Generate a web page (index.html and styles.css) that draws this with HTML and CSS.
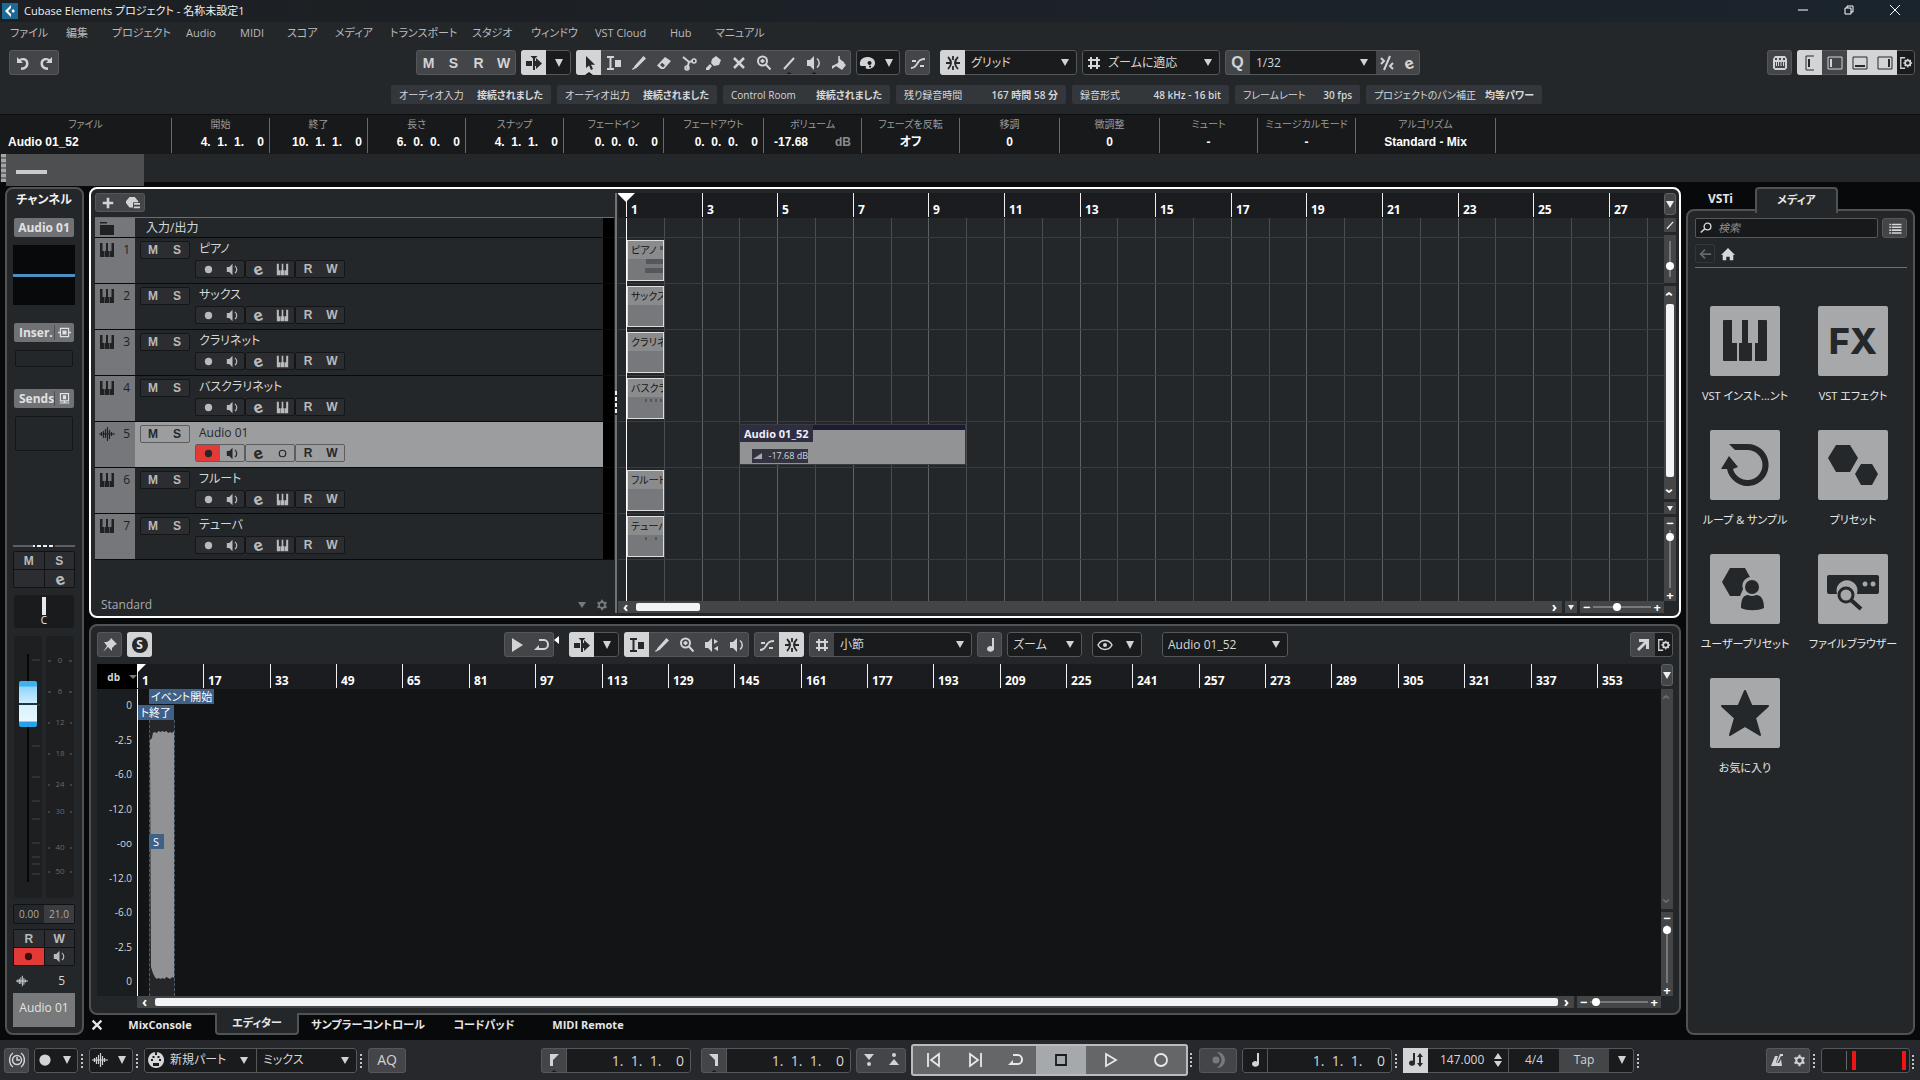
FILE: index.html
```html
<!DOCTYPE html>
<html lang="ja">
<head>
    <meta charset="UTF-8">
    <meta name="viewport" content="width=device-width, initial-scale=1.0">
    <title>Cubase Elements プロジェクト - 名称未設定1</title>
    <link rel="stylesheet" href="styles.css">
</head>
<body>

    <svg class="sprite" aria-hidden="true">
        <symbol id="undo" viewBox="0 0 16 16"><path d="M3 2v6h6L6.800 5.800C10 4.500 12 6 12 8.500S10 12.500 7 12.500V15c5 0 7.500-3 7.500-6.500C14.500 4 10 1.500 5.200 4.200z"/></symbol>
        <symbol id="redo" viewBox="0 0 16 16"><path d="M13 2v6H7l2.200-2.200C6 4.500 4 6 4 8.500S6 12.500 9 12.500V15c-5 0-7.500-3-7.500-6.500C1.500 4 6 1.500 10.800 4.200z"/></symbol>
        <symbol id="autoscroll" viewBox="0 0 16 16"><path d="M0 6h6v5H0zM10 3l6 5.500-6 5.500v-3H9V6h1zM7 3h2v12H7zM4.500 1h7L8 4.500z"/></symbol>
        <symbol id="arrow" viewBox="0 0 16 16"><path d="M5 1v12l3-2.500 2 4.500 2-1-2-4.300h4z"/></symbol>
        <symbol id="range" viewBox="0 0 16 16"><path d="M1 1h7v2H5.500v10H8v2H1v-2h2.500V3H1zM9 5h6v7H9z"/></symbol>
        <symbol id="pencil" viewBox="0 0 16 16"><path d="M12.500 1 15 3.500 5.500 13 2 14.500 3.500 11zM1 15l1-2.500L3.500 14z"/></symbol>
        <symbol id="eraser" viewBox="0 0 16 16"><path d="M9 2l6 4-7 8H5L1 10.500zM4 10l3 2.500 2-2.300L6 7.800z" fill-rule="evenodd"/></symbol>
        <symbol id="cut" viewBox="0 0 16 16"><path d="M2 2l6 5 4-1M6 14l2-7" fill="none" stroke="currentColor" stroke-width="2"/><circle cx="13" cy="6" r="2" fill="none" stroke="currentColor" stroke-width="1.500"/><circle cx="6" cy="13" r="2" fill="none" stroke="currentColor" stroke-width="1.500"/></symbol>
        <symbol id="glue" viewBox="0 0 16 16"><path d="M10 1l5 4-2 5-5 1-3-3 1-4zM4 9l2 2-3 4H0v-2z"/></symbol>
        <symbol id="cross" viewBox="0 0 16 16"><path d="M3 3l10 10M13 3L3 13" stroke="currentColor" stroke-width="2.500"/></symbol>
        <symbol id="zoom" viewBox="0 0 16 16"><circle cx="6.500" cy="6" r="4.500" fill="none" stroke="currentColor" stroke-width="2"/><path d="M9.500 9l5 5.500M4.500 6h4M6.500 4v4" stroke="currentColor" stroke-width="2"/></symbol>
        <symbol id="line" viewBox="0 0 16 16"><path d="M3 14L13 3" stroke="currentColor" stroke-width="2"/></symbol>
        <symbol id="speaker" viewBox="0 0 16 16"><path d="M1 5h3l4-4v14l-4-4H1z"/><path d="M11 3.500c3 2.500 3 6.500 0 9" fill="none" stroke="currentColor" stroke-width="1.500"/></symbol>
        <symbol id="scrub" viewBox="0 0 16 16"><path d="M1 5h3l4-4v14l-4-4H1zM10 7V2l4 2.500zM14 9v5l-4-2.500z"/></symbol>
        <symbol id="bucket" viewBox="0 0 16 16"><path d="M8 3l7 7-4 5-6-4-4 3v-3l6-3z"/><path d="M8 1v4l5 3" fill="none" stroke="currentColor" stroke-width="1.500"/></symbol>
        <symbol id="palette" viewBox="0 0 16 16"><path d="M8 2c5 0 8 2.500 8 6s-3 6-7 6c-2 0-3-1-2-3H2C0 11 0 2 8 2zm2.500 4a2 2 0 1 0 .1 0zM11 10.500a1 1 0 1 0 .1 0z" fill-rule="evenodd"/></symbol>
        <symbol id="fade" viewBox="0 0 16 16"><path d="M1 13c8 0 4-9 14-9M2 6h4M10 11h4" fill="none" stroke="currentColor" stroke-width="2"/></symbol>
        <symbol id="snap" viewBox="0 0 16 16"><path d="M3 2c4 4 4 8 0 12M13 2c-4 4-4 8 0 12M8 1v4M8 11v4M1 8h4M11 8h4" fill="none" stroke="currentColor" stroke-width="1.800"/></symbol>
        <symbol id="hash" viewBox="0 0 16 16"><path d="M5 2v12M11 2v12M2 5h12M2 11h12" stroke="currentColor" stroke-width="2"/></symbol>
        <symbol id="iq" viewBox="0 0 16 16"><path d="M11 1L5 15M2 3l3 3-3 3M14 8l-3 3 3 3" fill="none" stroke="currentColor" stroke-width="2"/></symbol>
        <symbol id="kbd" viewBox="0 0 16 16"><path d="M3 1h10l2 3v9l-2 2H3l-2-2V4zM3 3v2h2V3zM7 3v2h2V3zM11 3v2h2V3zM3 7v6h10V7h-1v4h-1V7H9.500v4h-1V7H7v4H6V7H5v4H4V7z" fill-rule="evenodd"/></symbol>
        <symbol id="zl" viewBox="0 0 16 16"><path d="M12 1H4v14h8" fill="none" stroke="currentColor"/><path d="M6 4h2v8H6z"/></symbol>
        <symbol id="zi" viewBox="0 0 16 16"><path d="M1 2h14v12H1z" fill="none" stroke="currentColor"/><path d="M3 4h2v8H3z"/></symbol>
        <symbol id="zb" viewBox="0 0 16 16"><path d="M1 2h14v12H1z" fill="none" stroke="currentColor"/><path d="M3 10h10v2H3z"/></symbol>
        <symbol id="zr" viewBox="0 0 16 16"><path d="M1 2h14v12H1z" fill="none" stroke="currentColor"/><path d="M11 4h2v8h-2z"/></symbol>
        <symbol id="setup" viewBox="0 0 16 16"><path d="M7 2H2v12h5" fill="none" stroke="currentColor" stroke-width="1.500"/><circle cx="10" cy="8" r="3" fill="none" stroke="currentColor" stroke-width="2"/><path d="M10 3v2M10 11v2M5 8h2M13 8h2M6.500 4.500L8 6M12 10l1.500 1.500M13.500 4.500L12 6M8 10l-1.500 1.500" stroke="currentColor" stroke-width="1.500"/></symbol>
        <symbol id="gear" viewBox="0 0 16 16"><circle cx="8" cy="8" r="4" fill="none" stroke="currentColor" stroke-width="2.500"/><path d="M8 1v3M8 12v3M1.900 4.500l2.600 1.500M11.500 10l2.600 1.500M1.900 11.500L4.500 10M11.500 6l2.600-1.500" stroke="currentColor" stroke-width="2.500"/></symbol>
        <symbol id="down" viewBox="0 0 16 16"><path d="M4 4h8l-4 8z"/></symbol>
        <symbol id="plus" viewBox="0 0 16 16"><path d="M8 2v12M2 8h12" stroke="currentColor" stroke-width="3"/></symbol>
        <symbol id="preset" viewBox="0 0 16 16"><path d="M4 1h6l4 5v1H8v6H4L0 8V6zM9 8h7v2H9zM9 12h7v2H9z"/></symbol>
        <symbol id="folder" viewBox="0 0 16 16"><path d="M1 2h7v1.500H1zM1 5h14v10H1z"/></symbol>
        <symbol id="keys" viewBox="0 0 16 16"><path d="M1 1h2.500v8H5v6H1zM7 1h2v8h1.500v6h-5V9H7zM12.500 1H15v14h-4V9h1.500z"/></symbol>
        <symbol id="wave" viewBox="0 0 16 16"><path d="M0 8h16M2.500 6v4M4.500 5v7M6.500 3v9M8.500 1v14M10.500 4v9M12.500 6v4" stroke="currentColor" stroke-width="1.200"/></symbol>
        <symbol id="dot" viewBox="0 0 16 16"><circle cx="8" cy="8" r="4.500"/></symbol>
        <symbol id="ring" viewBox="0 0 16 16"><circle cx="8" cy="8" r="4" fill="none" stroke="currentColor" stroke-width="1.500"/></symbol>
        <symbol id="plug" viewBox="0 0 16 16"><path d="M3 3h10v10H3z" fill="none" stroke="currentColor" stroke-width="1.500"/><path d="M5.500 5.500h5v5h-5zM0 7h3v2H0zM13 7h3v2h-3z"/></symbol>
        <symbol id="send" viewBox="0 0 16 16"><path d="M3 2h10v9H3z" fill="none" stroke="currentColor" stroke-width="1.500"/><path d="M6 4h4v5H6zM7 11h2v3H7zM2 13h12v1H2z"/></symbol>
        <symbol id="search" viewBox="0 0 16 16"><circle cx="10" cy="6" r="4.500" fill="none" stroke="currentColor" stroke-width="1.800"/><path d="M6.500 9L1 14" stroke="currentColor" stroke-width="2"/></symbol>
        <symbol id="list" viewBox="0 0 16 16"><path d="M1 2h2v2H1zM4 2h12v2H4zM1 5.500h2v2H1zM4 5.500h12v2H4zM1 9h2v2H1zM4 9h12v2H4zM1 12.500h2v2H1zM4 12.500h12v2H4z"/></symbol>
        <symbol id="back" viewBox="0 0 16 16"><path d="M15 8H3M8 3L3 8l5 5" fill="none" stroke="currentColor" stroke-width="2"/></symbol>
        <symbol id="home" viewBox="0 0 16 16"><path d="M8 1l8 8h-2v6h-4v-4H6v4H2V9H0z"/></symbol>
        <symbol id="pin" viewBox="0 0 16 16"><path d="M9 1l6 6-2 1-3 3v3L6 10l-5 5 4-6-3-4h3l3-2z"/></symbol>
        <symbol id="play" viewBox="0 0 16 16"><path d="M3 1l11 7-11 7z"/></symbol>
        <symbol id="playo" viewBox="0 0 16 16"><path d="M3 2l10 6-10 6z" fill="none" stroke="currentColor" stroke-width="1.800"/></symbol>
        <symbol id="loop" viewBox="0 0 16 16"><path d="M5 3h5a4 4.500 0 0 1 0 9H3" fill="none" stroke="currentColor" stroke-width="2"/><path d="M0 13l5-5v5z"/></symbol>
        <symbol id="note" viewBox="0 0 16 16"><path d="M10 1h2v11a3.500 2.800 0 1 1-2-2.600z"/></symbol>
        <symbol id="eye" viewBox="0 0 16 16"><path d="M1 8c3-6 11-6 14 0-3 6-11 6-14 0z" fill="none" stroke="currentColor" stroke-width="1.500"/><circle cx="8" cy="8" r="2"/></symbol>
        <symbol id="open" viewBox="0 0 16 16"><path d="M4 2h10v10h-3V7l-7 7-2-2 7-7H4z"/></symbol>
        <symbol id="clock" viewBox="0 0 16 16"><circle cx="8" cy="8" r="4.500" fill="none" stroke="currentColor" stroke-width="1.500"/><path d="M8 5v3h3M4 1C-.5 4-.5 12 4 15M12 1c4.500 3 4.500 11 0 14" fill="none" stroke="currentColor" stroke-width="1.500"/></symbol>
        <symbol id="midi" viewBox="0 0 16 16"><path d="M8 0a8 8 0 1 0 .1 0zM7 0h2v3H7zM3 7h2v2H3zM11 7h2v2h-2zM4.500 4h2v2h-2zM9.500 4h2v2h-2zM5 11h6v3H5z" fill-rule="evenodd"/></symbol>
        <symbol id="locl" viewBox="0 0 16 16"><path d="M4 2h9L7 8v6H4z"/></symbol>
        <symbol id="locr" viewBox="0 0 16 16"><path d="M3 2h9v12H9V8z"/></symbol>
        <symbol id="punchi" viewBox="0 0 16 16"><path d="M3 2h10L8 8z"/><circle cx="8" cy="12" r="2"/></symbol>
        <symbol id="puncho" viewBox="0 0 16 16"><path d="M3 13h10L8 7z"/><circle cx="8" cy="3" r="2"/></symbol>
        <symbol id="prev" viewBox="0 0 16 16"><path d="M2 1v14M13 2L5 8l8 6z" fill="none" stroke="currentColor" stroke-width="1.800"/></symbol>
        <symbol id="next" viewBox="0 0 16 16"><path d="M14 1v14M3 2l8 6-8 6z" fill="none" stroke="currentColor" stroke-width="1.800"/></symbol>
        <symbol id="stop" viewBox="0 0 16 16"><path d="M3 3h10v10H3z" fill="none" stroke="currentColor" stroke-width="1.800"/></symbol>
        <symbol id="rec" viewBox="0 0 16 16"><circle cx="8" cy="8" r="6" fill="none" stroke="currentColor" stroke-width="1.800"/></symbol>
        <symbol id="jog" viewBox="0 0 16 16"><path d="M7 0a8 8 0 0 1 0 16c6-5 6-11 0-16z"/><circle cx="6" cy="8" r="3.500"/></symbol>
        <symbol id="tempo" viewBox="0 0 16 16"><path d="M5 1h2v10a3 2.600 0 1 1-2-2.300zM12 1l3 4h-2v6h2l-3 4-3-4h2V5H9z"/></symbol>
        <symbol id="metro" viewBox="0 0 16 16"><path d="M6 4h3l-1 3-1 4h3l2-4 1 7H2zM11 2h3v2h-2L8 12H7z"/></symbol>
    </svg>

    <header class="header">
        <div class="titlebar">
            <svg class="logo" viewBox="0 0 16 16"><rect width="16" height="16" fill="#1c6a96"/><path d="M9 2L3 8l6 6V11L6 8l3-3zM11 6l2 2-2 2-1.500-2z" fill="#fff"/></svg>
            <h1>Cubase Elements プロジェクト - 名称未設定1</h1>
            <div class="window-buttons">
                <button aria-label="最小化"><svg viewBox="0 0 10 10"><path d="M0 5h10"/></svg></button>
                <button aria-label="元に戻す"><svg viewBox="0 0 10 10"><path d="M1 3h6v6H1zM3 3V1h6v6H7"/></svg></button>
                <button aria-label="閉じる"><svg viewBox="0 0 10 10"><path d="M0 0l10 10M10 0L0 10"/></svg></button>
            </div>
        </div>

        <nav class="menu">
            <button>ファイル</button>
            <button>編集</button>
            <button>プロジェクト</button>
            <button>Audio</button>
            <button>MIDI</button>
            <button>スコア</button>
            <button>メディア</button>
            <button>トランスポート</button>
            <button>スタジオ</button>
            <button>ウィンドウ</button>
            <button>VST Cloud</button>
            <button>Hub</button>
            <button>マニュアル</button>
        </nav>

        <div class="toolbar">
            <div class="side">
                <div class="group">
                    <button class="tool" aria-label="元に戻す"><svg class="icon"><use href="#undo"/></svg></button>
                    <button class="tool" aria-label="やり直し"><svg class="icon"><use href="#redo"/></svg></button>
                </div>
            </div>
            <div class="tools">
                <div class="group letters">
                    <button class="tool">M</button>
                    <button class="tool">S</button>
                    <button class="tool">R</button>
                    <button class="tool">W</button>
                </div>
                <div class="group">
                    <button class="tool on" aria-label="オートスクロール"><svg class="icon"><use href="#autoscroll"/></svg></button>
                    <button class="tool dark" aria-label="設定"><svg class="icon"><use href="#down"/></svg></button>
                </div>
                <div class="group">
                    <button class="tool on notch" aria-label="選択"><svg class="icon"><use href="#arrow"/></svg></button>
                    <button class="tool" aria-label="範囲選択"><svg class="icon"><use href="#range"/></svg></button>
                    <button class="tool" aria-label="鉛筆"><svg class="icon"><use href="#pencil"/></svg></button>
                    <button class="tool" aria-label="消しゴム"><svg class="icon"><use href="#eraser"/></svg></button>
                    <button class="tool" aria-label="はさみ"><svg class="icon"><use href="#cut"/></svg></button>
                    <button class="tool" aria-label="のり"><svg class="icon"><use href="#glue"/></svg></button>
                    <button class="tool" aria-label="ミュート"><svg class="icon"><use href="#cross"/></svg></button>
                    <button class="tool" aria-label="ズーム"><svg class="icon"><use href="#zoom"/></svg></button>
                    <button class="tool notch" aria-label="ライン"><svg class="icon"><use href="#line"/></svg></button>
                    <button class="tool notch" aria-label="再生"><svg class="icon"><use href="#speaker"/></svg></button>
                    <button class="tool" aria-label="カラー"><svg class="icon"><use href="#bucket"/></svg></button>
                </div>
                <div class="group">
                    <button class="tool dark narrow" aria-label="カラーメニュー"><svg class="icon"><use href="#palette"/></svg></button>
                    <button class="tool dark narrow" aria-label="カラー設定"><svg class="icon"><use href="#down"/></svg></button>
                </div>
                <div class="group">
                    <button class="tool" aria-label="ゼロクロスポイント"><svg class="icon"><use href="#fade"/></svg></button>
                </div>
                <div class="group gap-left">
                    <button class="tool on" aria-label="スナップ"><svg class="icon"><use href="#snap"/></svg></button>
                    <label class="dd w112"><select aria-label="スナップタイプ"><option>グリッド</option></select></label>
                </div>
                <div class="group">
                    <label class="dd w138 icon-left"><svg class="icon"><use href="#hash"/></svg><select aria-label="グリッドタイプ"><option>ズームに適応</option></select></label>
                </div>
                <div class="group">
                    <button class="tool big">Q</button>
                    <label class="dd w126"><select aria-label="クオンタイズ"><option>1/32</option></select></label>
                    <button class="tool narrow" aria-label="iQ"><svg class="icon"><use href="#iq"/></svg></button>
                    <button class="tool narrow e"><span>e</span></button>
                </div>
            </div>
            <div class="tools">
                <div class="group">
                    <button class="tool" aria-label="キーボード"><svg class="icon"><use href="#kbd"/></svg></button>
                </div>
                <div class="group">
                    <button class="tool on" aria-label="左ゾーン"><svg class="icon"><use href="#zl"/></svg></button>
                    <button class="tool" aria-label="インスペクター"><svg class="icon"><use href="#zi"/></svg></button>
                    <button class="tool on" aria-label="下ゾーン"><svg class="icon"><use href="#zb"/></svg></button>
                    <button class="tool on" aria-label="右ゾーン"><svg class="icon"><use href="#zr"/></svg></button>
                    <button class="tool dark slim" aria-label="設定"><svg class="icon"><use href="#setup"/></svg></button>
                </div>
            </div>
        </div>

        <dl class="status">
            <div><dt>オーディオ入力</dt><dd>接続されました</dd></div>
            <div><dt>オーディオ出力</dt><dd>接続されました</dd></div>
            <div><dt>Control Room</dt><dd>接続されました</dd></div>
            <div><dt>残り録音時間</dt><dd>167 時間 58 分</dd></div>
            <div><dt>録音形式</dt><dd>48 kHz - 16 bit</dd></div>
            <div><dt>フレームレート</dt><dd>30 fps</dd></div>
            <div><dt>プロジェクトのパン補正</dt><dd>均等パワー</dd></div>
        </dl>
    </header>

    <dl class="infoline">
        <div class="file"><dt>ファイル</dt><dd>Audio 01_52</dd></div>
        <div class="pos"><dt>開始</dt><dd>4.  1.  1.    0</dd></div>
        <div class="pos"><dt>終了</dt><dd>10.  1.  1.    0</dd></div>
        <div class="pos"><dt>長さ</dt><dd>6.  0.  0.    0</dd></div>
        <div class="pos"><dt>スナップ</dt><dd>4.  1.  1.    0</dd></div>
        <div class="pos"><dt>フェードイン</dt><dd>0.  0.  0.    0</dd></div>
        <div class="pos"><dt>フェードアウト</dt><dd>0.  0.  0.    0</dd></div>
        <div class="vol"><dt>ボリューム</dt><dd>-17.68 <span>dB</span></dd></div>
        <div><dt>フェーズを反転</dt><dd>オフ</dd></div>
        <div><dt>移調</dt><dd>0</dd></div>
        <div><dt>微調整</dt><dd>0</dd></div>
        <div><dt>ミュート</dt><dd>-</dd></div>
        <div><dt>ミュージカルモード</dt><dd>-</dd></div>
        <div><dt>アルゴリズム</dt><dd>Standard - Mix</dd></div>
    </dl>

    <div class="overview"><div class="overview-view"><span class="overview-event"></span></div></div>

    <main class="main">
        <aside class="channel">
            <h2>チャンネル</h2>
            <button class="chip">Audio 01</button>
            <div class="eq"></div>
            <div class="chip split"><span>Inser.</span><svg class="icon"><use href="#plug"/></svg></div>
            <div class="slot"></div>
            <div class="chip split"><span>Sends</span><svg class="icon"><use href="#send"/></svg></div>
            <div class="slot tall"></div>
            <div class="channel-bottom">
                <div class="handle"></div>
                <div class="pad">
                    <button>M</button><button>S</button>
                    <button aria-label="バイパス"></button><button class="e"><span>e</span></button>
                </div>
                <div class="pan"><i></i>C</div>
                <div class="faders">
                    <div class="well">
                        <svg class="ticks" viewBox="0 0 8 262"><path d="M0 24h8M0 69h8M0 110h8M0 141h8M0 165h8M0 183h8M0 207h8M0 221h8M0 228h8M0 238h8"/></svg>
                        <input type="range" class="fader" aria-label="ボリューム" min="0" max="100" value="15">
                    </div>
                    <div class="well">
                        <svg class="meter" viewBox="0 0 28 262">
                            <text x="14" y="27">0</text><text x="14" y="58">6</text><text x="14" y="89">12</text><text x="14" y="120">18</text><text x="14" y="151">24</text><text x="14" y="178">30</text><text x="14" y="214">40</text><text x="14" y="238">50</text>
                            <path d="M2 25h3M23 25h3M2 56h3M23 56h3M2 87h2M24 87h2M2 118h2M24 118h2M2 149h2M24 149h2M2 176h2M24 176h2M2 212h2M24 212h2M2 236h2M24 236h2"/>
                        </svg>
                    </div>
                </div>
                <div class="values"><span>0.00</span><span>21.0</span></div>
                <div class="pad">
                    <button>R</button><button>W</button>
                    <button class="armed" aria-label="録音可能"><svg class="icon"><use href="#dot"/></svg></button><button aria-label="モニタリング"><svg class="icon"><use href="#speaker"/></svg></button>
                </div>
                <div class="channel-id"><svg class="icon"><use href="#wave"/></svg><span>5</span></div>
                <div class="channel-name">Audio 01</div>
            </div>
        </aside>

        <section class="center">
            <div class="project">
                <div class="tracklist">
                    <div class="tracklist-head">
                        <div class="group short">
                            <button class="tool" aria-label="トラックを追加"><svg class="icon"><use href="#plus"/></svg></button>
                            <button class="tool" aria-label="プリセット"><svg class="icon"><use href="#preset"/></svg></button>
                        </div>
                    </div>
                    <div id="tracks"></div>
                    <div class="tracklist-foot">Standard<span class="tri"></span><svg class="icon"><use href="#gear"/></svg></div>
                </div>
                <div class="divider"></div>
                <div class="timeline">
                    <div class="ruler" id="ruler"></div>
                    <div class="lanes" id="lanes"></div>
                    <div class="hbar">
                        <div class="hscroll"><button aria-label="左へ">‹</button><span class="thumb t-project"></span><button class="end" aria-label="右へ">›</button></div>
                        <button class="mini" aria-label="メニュー"><span class="tri"></span></button>
                        <div class="hzoom"><b>−</b><input type="range" aria-label="横ズーム" value="40"><b>+</b></div>
                    </div>
                </div>
                <div class="vbar">
                    <button class="mini head" aria-label="メニュー"><span class="tri"></span></button>
                    <button class="mini edit" aria-label="編集"><svg class="icon"><use href="#line"/></svg></button>
                    <div class="vzoom wave-zoom"><input type="range" aria-label="波形ズーム" value="75"></div>
                    <div class="vscroll"><button aria-label="上へ">‹</button><span class="thumb"></span><button aria-label="下へ">›</button></div>
                    <button class="mini" aria-label="メニュー"><span class="tri"></span></button>
                    <div class="vzoom"><b>−</b><input type="range" aria-label="縦ズーム" value="5"><b>+</b></div>
                </div>
            </div>

            <div class="lower">
                <div class="lower-bar">
                    <div class="group"><button class="tool" aria-label="固定"><svg class="icon"><use href="#pin"/></svg></button></div>
                    <div class="group"><button class="tool on solo"><span>S</span></button></div>
                    <div class="lower-tools">
                        <div class="group">
                            <button class="tool" aria-label="試聴"><svg class="icon"><use href="#play"/></svg></button>
                            <button class="tool" aria-label="ループ"><svg class="icon"><use href="#loop"/></svg></button>
                        </div>
                        <span class="tri-left"></span>
                        <div class="group">
                            <button class="tool on" aria-label="オートスクロール"><svg class="icon"><use href="#autoscroll"/></svg></button>
                            <button class="tool dark" aria-label="設定"><svg class="icon"><use href="#down"/></svg></button>
                        </div>
                        <div class="group">
                            <button class="tool on" aria-label="範囲選択"><svg class="icon"><use href="#range"/></svg></button>
                            <button class="tool" aria-label="鉛筆"><svg class="icon"><use href="#pencil"/></svg></button>
                            <button class="tool" aria-label="ズーム"><svg class="icon"><use href="#zoom"/></svg></button>
                            <button class="tool" aria-label="スクラブ"><svg class="icon"><use href="#scrub"/></svg></button>
                            <button class="tool" aria-label="再生"><svg class="icon"><use href="#speaker"/></svg></button>
                        </div>
                        <div class="group">
                            <button class="tool" aria-label="ゼロクロスポイント"><svg class="icon"><use href="#fade"/></svg></button>
                            <button class="tool on" aria-label="スナップ"><svg class="icon"><use href="#snap"/></svg></button>
                        </div>
                        <div class="group">
                            <button class="tool" aria-label="グリッド"><svg class="icon"><use href="#hash"/></svg></button>
                            <label class="dd w138"><select aria-label="小節"><option>小節</option></select></label>
                        </div>
                        <div class="group"><button class="tool" aria-label="音符"><svg class="icon"><use href="#note"/></svg></button></div>
                        <div class="group"><label class="dd w75"><select aria-label="ズームプリセット"><option>ズーム</option></select></label></div>
                        <div class="group gap-left">
                            <button class="tool dark" aria-label="表示"><svg class="icon"><use href="#eye"/></svg></button>
                            <button class="tool dark" aria-label="表示設定"><svg class="icon"><use href="#down"/></svg></button>
                        </div>
                        <div class="group gap-wide"><label class="dd w126"><select aria-label="イベント"><option>Audio 01_52</option></select></label></div>
                    </div>
                    <div class="group right">
                        <button class="tool" aria-label="独立ウィンドウ"><svg class="icon"><use href="#open"/></svg></button>
                        <button class="tool dark slim" aria-label="設定"><svg class="icon"><use href="#setup"/></svg></button>
                    </div>
                </div>
                <div class="sample">
                    <div class="scale">
                        <div class="scale-head">db<span class="tri"></span></div>
                        <ol><li>0</li><li>-2.5</li><li>-6.0</li><li>-12.0</li><li>-oo</li><li>-12.0</li><li>-6.0</li><li>-2.5</li><li>0</li></ol>
                    </div>
                    <div class="timeline">
                        <div class="ruler" id="sampleRuler"></div>
                        <div class="wave-area">
                            <div class="event">
                                <svg viewBox="0 0 25 250" preserveAspectRatio="none"><path d="M0 10l2-2 1-5 2-1 2 1 2-2 2 1 2-1 2 1 2-1 2 2 2-1 2 1 2-2v247l-2-1-2 2-2-1-2-1-2 2-2-1-2 1-2-1-2 1-2-2-2-4-2-6z"/></svg>
                            </div>
                            <span class="flag start">イベント開始</span>
                            <span class="flag stop">ト終了</span>
                            <span class="flag sync">S</span>
                            <span class="playline"></span>
                        </div>
                        <div class="hbar">
                            <div class="hscroll"><button aria-label="左へ">‹</button><span class="thumb"></span><button class="end" aria-label="右へ">›</button></div>
                            <div class="hzoom"><b>−</b><input type="range" aria-label="横ズーム" value="3"><b>+</b></div>
                        </div>
                    </div>
                    <div class="vbar">
                        <button class="mini head" aria-label="メニュー"><span class="tri"></span></button>
                        <div class="vscroll off"><button aria-label="上へ">‹</button><button aria-label="下へ">›</button></div>
                        <div class="vzoom"><b>−</b><input type="range" aria-label="縦ズーム" value="2"><b>+</b></div>
                    </div>
                </div>
            </div>

            <nav class="lower-tabs">
                <button class="close" aria-label="閉じる"><svg class="icon"><use href="#cross"/></svg></button>
                <button>MixConsole</button>
                <button class="active">エディター</button>
                <button>サンプラーコントロール</button>
                <button>コードパッド</button>
                <button>MIDI Remote</button>
            </nav>
        </section>

        <aside class="rack">
            <nav class="rack-tabs"><button>VSTi</button><button class="active">メディア</button></nav>
            <div class="rack-body">
                <div class="search">
                    <label><svg class="icon"><use href="#search"/></svg><input type="text" placeholder="検索" aria-label="検索"></label>
                    <button aria-label="一覧"><svg class="icon"><use href="#list"/></svg></button>
                </div>
                <div class="crumbs">
                    <button class="back" aria-label="戻る"><svg class="icon"><use href="#back"/></svg></button>
                    <button aria-label="ホーム"><svg class="icon"><use href="#home"/></svg></button>
                </div>
                <div class="tiles">
                    <button><span class="tile"><svg viewBox="0 0 70 70"><path d="M14 14h8v23h5v18H14q-1 0-1-1V15q0-1 1-1zM32 14h6v23h4v17q0 1-1 1H30q-1 0-1-1V37h3zM48 14h8q1 0 1 1v39q0 1-1 1H45V37h3z"/></svg></span>VST インスト...ント</button>
                    <button><span class="tile fx">FX</span>VST エフェクト</button>
                    <button><span class="tile"><svg viewBox="0 0 70 70"><path d="M19 14h18a21 21 0 1 1-20 25h-6l8-13 9 11-5 2a15 15 0 1 0 14-19H25z"/></svg></span>ループ &amp; サンプル</button>
                    <button><span class="tile"><svg viewBox="0 0 70 70"><path d="M18 15h14l8 13-8 14H18l-8-14zM43 34h11l6 10-6 11H43l-6-11z"/></svg></span>プリセット</button>
                    <button><span class="tile"><svg viewBox="0 0 70 70"><path d="M20 14h15l5 9a9 9 0 0 0-7 12l-3 7H20l-8-14z"/><circle cx="42" cy="33" r="7"/><path d="M31 54c0-10 3-13 7-13q4 2 8 0c5 0 8 4 8 13-6 3-17 3-23 0z"/></svg></span>ユーザープリセット</button>
                    <button><span class="tile"><svg viewBox="0 0 70 70"><path d="M11 21h48q2 0 2 2v15q0 2-2 2H39a10.500 10.500 0 1 0-20 0h-8q-2 0-2-2V23q0-2 2-2zM47 27.500a2.500 2.500 0 1 0 .1 0zM55 27.500a2.500 2.500 0 1 0 .1 0z" fill-rule="evenodd"/><circle cx="28" cy="41" r="7" fill="none" stroke="currentColor" stroke-width="3"/><path d="M33 46l10 9" stroke="currentColor" stroke-width="4"/></svg></span>ファイルブラウザー</button>
                    <button><span class="tile"><svg viewBox="0 0 70 70"><path d="M35 13l6.500 15H58l-13 12 5 17-15-9-15 9 5-17-13-12h16.500z" stroke="currentColor" stroke-width="2" stroke-linejoin="round"/></svg></span>お気に入り</button>
                </div>
            </div>
        </aside>
    </main>

    <footer class="transport">
        <div class="group"><button class="tool" aria-label="待機"><svg class="icon"><use href="#clock"/></svg></button></div>
        <div class="group dots">
            <button class="tool dark narrow" aria-label="録音モード"><svg class="icon wide"><use href="#dot"/></svg></button>
            <button class="tool dark narrow" aria-label="録音モード設定"><svg class="icon"><use href="#down"/></svg></button>
        </div>
        <div class="group dots">
            <button class="tool dark narrow" aria-label="オーディオ録音"><svg class="icon"><use href="#wave"/></svg></button>
            <button class="tool dark narrow" aria-label="オーディオ録音設定"><svg class="icon"><use href="#down"/></svg></button>
        </div>
        <div class="group dots">
            <label class="dd w112 icon-left"><svg class="icon"><use href="#midi"/></svg><select aria-label="MIDI録音"><option>新規パート</option></select></label>
            <label class="dd w100"><select aria-label="サイクル録音"><option>ミックス</option></select></label>
        </div>
        <div class="group"><button class="tool aq">AQ</button></div>
        <div class="group locator first"><button class="tool notch" aria-label="左ロケーター"><svg class="icon"><use href="#locl"/></svg></button><output>1.  1.  1.    0</output></div>
        <div class="group locator"><button class="tool notch" aria-label="右ロケーター"><svg class="icon"><use href="#locr"/></svg></button><output>1.  1.  1.    0</output></div>
        <div class="group">
            <button class="tool" aria-label="パンチイン"><svg class="icon"><use href="#punchi"/></svg></button>
            <button class="tool" aria-label="パンチアウト"><svg class="icon"><use href="#puncho"/></svg></button>
        </div>
        <div class="play dots">
            <button class="p3" aria-label="先頭へ"><svg class="icon"><use href="#prev"/></svg></button>
            <button class="p3" aria-label="次へ"><svg class="icon"><use href="#next"/></svg></button>
            <button class="p3" aria-label="サイクル"><svg class="icon"><use href="#loop"/></svg></button>
            <button class="active" aria-label="停止"><svg class="icon"><use href="#stop"/></svg></button>
            <button aria-label="再生"><svg class="icon"><use href="#playo"/></svg></button>
            <button aria-label="録音"><svg class="icon"><use href="#rec"/></svg></button>
        </div>
        <div class="group"><button class="tool aq dim" aria-label="ジョグ"><svg class="icon"><use href="#jog"/></svg></button></div>
        <div class="group locator dots"><button class="tool dark" aria-label="時間形式"><svg class="icon"><use href="#note"/></svg></button><output>1.  1.  1.    0</output></div>
        <div class="group dots">
            <button class="tool on" aria-label="テンポトラック"><svg class="icon"><use href="#tempo"/></svg></button>
            <label class="tempo"><input type="text" value="147.000" aria-label="テンポ"><svg class="spin" viewBox="0 0 8 16"><path d="M0 7l4-6 4 6zM0 9h8l-4 6z"/></svg></label>
            <button class="tool dark text">4/4</button>
            <button class="tool text">Tap</button>
            <button class="tool dark" aria-label="設定"><svg class="icon"><use href="#down"/></svg></button>
        </div>
        <div class="group dots last">
            <button class="tool narrow" aria-label="メトロノーム"><svg class="icon"><use href="#metro"/></svg></button>
            <button class="tool narrow" aria-label="メトロノーム設定"><svg class="icon small"><use href="#gear"/></svg></button>
        </div>
        <div class="levels dots"><i></i><b></b><b></b></div>
    </footer>

    <script src="script.js"></script>
</body>
</html>
```
FILE: styles.css
```css
* {
    box-sizing: border-box;
}

body {
    margin: 0;
    min-height: 100vh;
    display: flex;
    flex-direction: column;
    background: #08090a;
    color: #d6d7d8;
    font-family: "Open Sans", "Noto Sans CJK JP", sans-serif;
    font-size: 12px;
    line-height: 16px;
    font-feature-settings: "palt";
    overflow: hidden;
}

button, select, input {
    font: inherit;
    font-feature-settings: inherit;
    color: inherit;
    background: none;
    border: 0;
    padding: 0;
    margin: 0;
}

h1, h2, dl, dt, dd, ol {
    margin: 0;
    padding: 0;
    font-size: 12px;
    font-weight: normal;
    list-style: none;
}

.sprite {
    display: none;
}

.icon {
    display: block;
    width: 16px;
    height: 16px;
    flex: none;
    fill: currentColor;
}

.icon.wide {
    width: 20px;
    height: 20px;
}

.icon.small {
    width: 13px;
    height: 13px;
}

.tri {
    width: 0;
    border: 4px solid transparent;
    border-top: 6px solid currentColor;
    border-bottom: 0;
}

/* header */
.header {
    background: #24272a;
    padding-bottom: 10px;
}

.titlebar {
    display: flex;
    align-items: center;
    gap: 6px;
    height: 22px;
    padding-left: 2px;
    background: linear-gradient(90deg, #1d1f22, #1a242c);
    color: #eee;
}

.titlebar h1 {
    font-size: 11px;
}

.logo {
    width: 16px;
    height: 16px;
}

.window-buttons {
    display: flex;
    margin-left: auto;
    padding-right: 2px;
}

.window-buttons button {
    width: 46px;
    height: 22px;
}

.window-buttons svg {
    width: 10px;
    height: 10px;
    fill: none;
    stroke: #fff;
}

.menu {
    display: grid;
    grid-template-columns: 56px 46px 74px 54px 47px 48px 55px 82px 59px 64px 75px 45px auto;
    height: 22px;
    padding-left: 10px;
    font-size: 11px;
    color: #b9babb;
}

.menu button {
    text-align: left;
    white-space: nowrap;
}

.toolbar {
    display: flex;
    justify-content: space-between;
    padding: 6px 5px 0 9px;
}

.side {
    width: 60px;
}

.tools {
    display: flex;
    gap: 5px;
}

.group {
    position: relative;
    display: flex;
    height: 25px;
    flex: none;
    width: max-content;
    border-radius: 3px;
    background: #434548;
    overflow: hidden;
}

/* outline, kept under the lit buttons */
.group::before {
    content: "";
    position: absolute;
    inset: 0;
    z-index: 1;
    border: 1px solid #55585a;
    border-radius: 3px;
    pointer-events: none;
}

.group.short {
    height: 19px;
}

.gap-left {
    margin-left: 5px;
}

.tool {
    position: relative;
    display: flex;
    align-items: center;
    justify-content: center;
    width: 25px;
    height: 100%;
    color: #d2d3d4;
}

.tool.on {
    z-index: 2;
    background: #d3d4d5;
    color: #26282a;
}

.tool.dark {
    background: #1a1b1d;
}

.tool.narrow {
    width: 22px;
}

.tool.slim {
    width: 18px;
}

.slim .icon {
    width: 14px;
}

.tool.big, .letters .tool {
    font-family: "Liberation Sans", sans-serif;
    font-weight: bold;
    font-size: 16px;
}

.letters .tool {
    font-size: 14px;
}

.e span {
    font-family: "Open Sans", sans-serif;
    font-weight: bold;
    font-size: 16px;
    line-height: 16px;
    transform: rotate(-20deg);
}

.tool.notch::after {
    content: "";
    position: absolute;
    bottom: 0;
    border: 4px solid transparent;
    border-top: 0;
    border-bottom: 3px solid #1a1b1d;
}

.dd {
    position: relative;
    display: flex;
    align-items: center;
    background: #1a1b1d;
}

.dd + .dd {
    border-left: 1px solid #55585a;
}

.dd select {
    flex: 1;
    width: 100%;
    height: 100%;
    padding-left: 6px;
    appearance: none;
    outline: none;
}

.dd::after {
    content: "";
    position: absolute;
    right: 8px;
    border: 4px solid transparent;
    border-top: 7px solid #d2d3d4;
    border-bottom: 0;
    pointer-events: none;
}

.dd.icon-left {
    padding-left: 4px;
}

.w75 { width: 75px; }
.w100 { width: 101px; }
.w112 { width: 112px; }
.w126 { width: 126px; }
.w138 { width: 138px; }

.status {
    display: grid;
    grid-template-columns: 160px 160px 167px 170px 157px 125px 176px;
    gap: 6px;
    width: max-content;
    margin: 10px auto 0;
    padding-left: 13px;
}

.status div {
    display: flex;
    justify-content: space-between;
    align-items: center;
    height: 19px;
    padding: 0 8px;
    border-radius: 2px;
    background: #33363a;
    white-space: nowrap;
}

.status dt {
    font-size: 10px;
}

.status dd {
    font-size: 10px;
    font-weight: 600;
}

/* info line */
.infoline {
    display: grid;
    grid-template-columns: 172px 98px 98px 98px 98px 100px 100px 98px 98px 100px 100px 98px 98px 140px;
    height: 40px;
    padding-top: 3px;
    background: #18191b;
    border-top: 1px solid #0c0d0e;
}

.infoline div {
    height: 35px;
    border-right: 1px solid #66686a;
    text-align: center;
    overflow: hidden;
}

.infoline dt {
    font-size: 10px;
    line-height: 13px;
    color: #9a9b9c;
}

.infoline dd {
    font-family: "Liberation Sans", "Noto Sans CJK JP", sans-serif;
    font-weight: bold;
    line-height: 22px;
    color: #fff;
}

.infoline .file dd {
    text-align: left;
    padding-left: 8px;
}

.infoline .pos dd {
    text-align: right;
    padding-right: 5px;
    white-space: pre;
}

.infoline .vol dd {
    display: flex;
    justify-content: space-between;
    padding: 0 10px;
}

.vol span {
    color: #8b8c8e;
}

.overview {
    height: 28px;
    padding-left: 6px;
    background: repeating-linear-gradient(#a5a6a8 0 3px, #6b6d6f 3px 5px) 1px 0 / 5px 28px no-repeat #24272a;
}

.overview-view {
    width: 138px;
    height: 28px;
    padding: 16px 10px;
    background: #4e4f51;
}

.overview-event {
    display: block;
    width: 31px;
    height: 4px;
    background: #c9cacb;
}

/* main layout */
.main {
    flex: 1;
    display: grid;
    grid-template-columns: 79px 1fr 229px;
    gap: 5px;
    padding: 5px;
}

.center {
    display: grid;
    grid-template-rows: 431fr 397fr 20px;
    min-width: 0;
}

/* channel strip */
.channel {
    display: flex;
    flex-direction: column;
    padding: 3px 7px 6px 6px;
    border: 2px solid #505254;
    border-radius: 8px;
    background: #24272a;
}

.channel h2 {
    text-align: center;
    font-weight: bold;
    color: #f0f0f0;
    margin-bottom: 10px;
}

.chip {
    height: 19px;
    margin: 0 1px;
    border-radius: 2px;
    background: #707174;
    color: #e0e1e2;
    font-weight: bold;
    white-space: nowrap;
}

.chip.split {
    display: flex;
    align-items: center;
    justify-content: space-between;
    padding-left: 5px;
}

.chip.split .icon {
    width: 20px;
    height: 15px;
    padding: 1px 2px;
    border-left: 1px solid #4e5052;
}

.eq {
    height: 60px;
    margin: 8px 0 18px;
    background: linear-gradient(#08090a 29px, #4a8fbf 29px, #4a8fbf 32px, #08090a 32px);
}

.slot {
    height: 17px;
    margin: 8px 2px 22px;
    border: 1px solid #141516;
    border-radius: 2px;
}

.slot.tall {
    height: 35px;
}

.channel-bottom {
    margin-top: auto;
}

.handle {
    height: 2px;
    margin-bottom: 4px;
    background: linear-gradient(90deg, #5d5f61 20px, transparent 20px, transparent 42px, #5d5f61 42px), repeating-linear-gradient(90deg, #eee 0 4px, transparent 4px 6px);
}

.pad {
    display: grid;
    grid-template-columns: 1fr 1fr;
    gap: 1px;
    padding: 1px;
    border-radius: 2px;
    background: #111213;
}

.pad button {
    display: flex;
    align-items: center;
    justify-content: center;
    height: 17px;
    background: #2b2d30;
    color: #b9babb;
    font-family: "Liberation Sans", sans-serif;
    font-weight: bold;
    font-size: 12px;
}

.pad .icon {
    width: 13px;
    height: 13px;
}

.pad .armed, .ctl .armed {
    background: #e33a37;
    color: #3a0f10;
}

.pan {
    display: flex;
    flex-direction: column;
    align-items: center;
    height: 33px;
    margin: 7px 1px 8px;
    padding-top: 2px;
    border-radius: 3px;
    background: #1a1b1d;
    color: #eee;
    font-size: 10px;
    line-height: 11px;
}

.pan i {
    width: 4px;
    height: 18px;
    background: #e8e8e8;
}

.faders {
    display: grid;
    grid-template-columns: 1fr 1fr;
    gap: 4px;
    margin: 0 1px 6px;
}

.well {
    position: relative;
    height: 262px;
    border-radius: 3px;
    background: #1d1f20;
}

.ticks {
    position: absolute;
    right: 2px;
    top: 0;
    width: 8px;
    height: 262px;
    stroke: #434547;
}

.fader {
    position: absolute;
    left: 4px;
    top: 18px;
    width: 20px;
    height: 228px;
    appearance: none;
    writing-mode: vertical-lr;
    background: linear-gradient(90deg, transparent 9px, #060707 9px, #060707 11px, transparent 11px);
}

.fader::-webkit-slider-thumb {
    appearance: none;
    width: 18px;
    height: 46px;
    border-radius: 2px;
    background: linear-gradient(#3db2f0 5px, #8fd4fa 6px, #cfeeff 22px, #234 22px, #234 24px, #d6f1ff 24px, #e9f8ff 40px, #2aa0e6 41px);
}

.meter {
    display: block;
    width: 28px;
    height: 262px;
    stroke: #636567;
}

.meter text {
    stroke: none;
    fill: #66686a;
    font-size: 8px;
    text-anchor: middle;
}

.values {
    display: grid;
    grid-template-columns: 1fr 1fr;
    margin-bottom: 5px;
    border: 1px solid #111213;
    border-radius: 2px;
    font-size: 10px;
    line-height: 18px;
    text-align: center;
    color: #a9aaac;
}

.values span + span {
    background: #3a3c3f;
}

.channel-id {
    display: flex;
    justify-content: space-between;
    align-items: center;
    height: 27px;
    padding: 2px 10px 0 3px;
}

.channel-id .icon {
    width: 12px;
}

.channel-name {
    height: 34px;
    padding-top: 7px;
    background: #77797b;
    text-align: center;
    color: #e2e3e4;
}

/* project window */
.project {
    display: grid;
    grid-template-columns: 519px 4px 1fr 12px;
    padding: 4px 3px 3px 4px;
    border: 2px solid #fff;
    border-radius: 8px;
    background: #24272a;
}

.tracklist {
    display: flex;
    flex-direction: column;
}

.tracklist-head {
    height: 25px;
    border-bottom: 1px solid #6b6d6f;
}

.tracklist-head .icon {
    width: 14px;
    height: 14px;
}

.track {
    display: grid;
    grid-template-columns: 40px 50px 1fr 11px;
    column-gap: 5px;
    height: 46px;
    border-bottom: 1px solid #08090a;
}

.track.folder {
    height: 20px;
}

.track-id {
    display: flex;
    justify-content: space-between;
    padding: 4px 5px 0 4px;
    background: #75777a;
    color: #1f2123;
}

.folder .track-id {
    padding-top: 2px;
}

.track::after {
    content: "";
    grid-column: 4;
    grid-row: 1;
    background: #000;
}

.track.selected {
    background: #9b9d9e;
    color: #26282a;
}

.ctl {
    display: flex;
    width: 50px;
    height: 18px;
    margin-top: 3px;
    border: 1px solid #141516;
    border-radius: 2px;
    background: #2b2d30;
}

.ctl button {
    flex: 1;
    display: flex;
    align-items: center;
    justify-content: center;
    color: #b9babb;
    font-family: "Liberation Sans", sans-serif;
    font-weight: bold;
    font-size: 12px;
}

.ctl .icon {
    width: 13px;
    height: 13px;
}

.selected .ctl {
    background: #9b9d9e;
    border-color: #5b5d5f;
}

.selected .ctl button {
    color: #26282a;
}

.track-name {
    padding: 3px 4px 0;
    white-space: nowrap;
}

.folder .track-name {
    grid-column: 2 / 4;
    padding: 2px 6px 0;
}

.track-ctls {
    display: flex;
}

.tracklist-foot {
    display: flex;
    align-items: center;
    gap: 10px;
    margin-top: auto;
    padding: 0 6px 0 6px;
    color: #a9aaac;
}

.tracklist-foot .tri {
    margin-left: auto;
    color: #77797b;
}

.tracklist-foot .icon {
    width: 12px;
    color: #77797b;
}

.divider {
    width: 2px;
    margin-left: 1px;
    background: linear-gradient(#707274 198px, transparent 198px, transparent 222px, #707274 222px), repeating-linear-gradient(#f0f0f0 0 4px, #24272a 4px 6px);
}

.timeline {
    display: flex;
    flex-direction: column;
    min-width: 0;
}

.ruler {
    position: relative;
    height: 25px;
    background: #1b1c20;
    overflow: hidden;
}

.mark {
    position: absolute;
    top: 0;
    height: 24px;
    padding: 9px 0 0 4px;
    border-left: 1px solid #f0f0f0;
    color: #fff;
    font-weight: bold;
    line-height: 15px;
}

.lanes {
    position: relative;
    flex: 1;
    overflow: hidden;
}

.lane {
    position: relative;
    height: 46px;
    border-bottom: 1px solid #3a3d3f;
}

.lane.folder {
    height: 20px;
}

.bar-line {
    position: absolute;
    top: 0;
    bottom: 0;
    width: 1px;
    background: #4a4d4f;
}

.bar-line.strong {
    background: #5f6264;
}

.clip {
    position: absolute;
    top: 2px;
    width: 37px;
    height: 41px;
    padding-left: 3px;
    border: 1px solid #dcdddd;
    background: linear-gradient(#8a8b8d 18px, #77787b 18px);
    color: #151617;
    font-size: 10px;
    line-height: 18px;
    white-space: nowrap;
    overflow: hidden;
}

.clip svg {
    position: absolute;
    inset: 0;
    width: 35px;
    height: 39px;
    fill: #55575a;
}

.clip.audio {
    width: 227px;
    padding: 0;
    border-color: #3a3b40;
    background: linear-gradient(#1d1b33 5px, #929395 5px);
}

.clip b {
    display: inline-block;
    padding: 0 4px;
    background: #2f2e40;
    color: #eeeefa;
    font-size: 11px;
    line-height: 17px;
}

.clip small {
    position: absolute;
    left: 12px;
    bottom: 1px;
    width: 56px;
    background: #33323f;
    color: #d6d6de;
    font-size: 9px;
    line-height: 14px;
    text-align: right;
}

.clip small::before {
    content: "";
    position: absolute;
    left: 1px;
    top: 4px;
    border-left: 9px solid transparent;
    border-bottom: 6px solid #a8a8b0;
}

.playhead {
    position: absolute;
    top: 0;
    border: 9px solid transparent;
    border-top: 9px solid #fff;
    border-bottom: 0;
}

.playline {
    position: absolute;
    top: 0;
    bottom: 0;
    left: 0;
    width: 1px;
    background: #fff;
}

/* scrollbars */
.hbar {
    display: flex;
    gap: 3px;
    height: 12px;
}

.hscroll {
    flex: 1;
    display: flex;
    align-items: center;
    gap: 6px;
    padding: 0 5px;
    background: #434547;
}

.hscroll button, .vscroll button {
    height: 12px;
    font-weight: bold;
    font-size: 14px;
    line-height: 8px;
    color: #fff;
}

.hscroll .thumb {
    flex: 1;
    height: 8px;
    margin-left: 2px;
    border-radius: 2px;
    background: #f2f3f4;
}

.hscroll .t-project {
    flex: 0 0 64px;
}

.hscroll .end {
    margin-left: auto;
}

.mini {
    display: flex;
    align-items: center;
    justify-content: center;
    flex: none;
    width: 12px;
    height: 12px;
    background: #434547;
    color: #eee;
}

.mini .tri {
    border-width: 5px 3px 0;
}

.mini.head {
    height: 22px;
    border: 1px solid #5f6163;
    border-radius: 3px;
}

.mini.head .tri {
    border-width: 7px 4px 0;
}

.mini.edit {
    height: 14px;
}

.mini .icon {
    width: 10px;
    height: 10px;
}

.hzoom, .vzoom {
    display: flex;
    align-items: center;
    justify-content: space-between;
    background: #434547;
    color: #fff;
}

.hzoom {
    width: 84px;
    padding: 0 3px;
}

.vzoom {
    flex-direction: column;
    height: 84px;
    flex: none;
}

.hzoom b, .vzoom b {
    line-height: 12px;
    font-size: 13px;
}

.hzoom input, .vzoom input {
    appearance: none;
    width: 58px;
    height: 8px;
    background: linear-gradient(transparent 3px, #77797b 3px, #77797b 5px, transparent 5px);
}

.vzoom input {
    writing-mode: vertical-lr;
    width: 8px;
    height: 58px;
    background: linear-gradient(90deg, transparent 3px, #77797b 3px, #77797b 5px, transparent 5px);
}

.hzoom input::-webkit-slider-thumb, .vzoom input::-webkit-slider-thumb {
    appearance: none;
    width: 8px;
    height: 8px;
    border-radius: 4px;
    background: #fff;
}

.wave-zoom {
    height: 48px;
    justify-content: center;
}

.wave-zoom input {
    height: 36px;
}

.vbar {
    display: flex;
    flex-direction: column;
    gap: 3px;
    padding-bottom: 12px;
}

.vscroll {
    flex: 1;
    display: flex;
    flex-direction: column;
    align-items: center;
    padding: 2px 0;
    background: #434547;
}

.vscroll button {
    transform: rotate(90deg);
}

.vscroll .thumb {
    flex: 1;
    width: 8px;
    margin: 4px 0 8px;
    border-radius: 2px;
    background: #f2f3f4;
}

.vscroll.off {
    justify-content: space-between;
}

.vscroll.off button {
    color: #6b6d6f;
}

/* sample editor */
.lower {
    display: flex;
    flex-direction: column;
    margin-top: 6px;
    padding: 6px 6px 5px;
    border: 2px solid #505254;
    border-radius: 8px;
    background: #24272a;
}

.lower-bar {
    display: flex;
    gap: 5px;
    margin-bottom: 7px;
}

.solo span {
    width: 16px;
    height: 16px;
    border-radius: 8px;
    background: #26282a;
    color: #e8e8e8;
    font-weight: bold;
}

.lower-tools {
    display: flex;
    gap: 5px;
    margin-left: 347px;
}

.tri-left {
    width: 5px;
    height: 8px;
    margin: 4px 5px 0 -5px;
    border: 4px solid transparent;
    border-left: 0;
    border-right: 5px solid #fff;
}

.gap-wide {
    margin-left: 15px;
}

.right {
    margin-left: auto;
}

.sample {
    flex: 1;
    display: grid;
    grid-template-columns: 40px 1fr 12px;
}

.scale {
    display: flex;
    flex-direction: column;
    background: #1b1e21;
    margin-bottom: 12px;
}

.scale-head {
    display: flex;
    align-items: center;
    justify-content: flex-end;
    gap: 9px;
    height: 25px;
    background: #000;
    font-size: 10px;
    font-weight: bold;
}

.scale-head .tri {
    border-width: 4px 4px 0;
    color: #77797b;
}

.scale ol {
    flex: 1;
    display: flex;
    flex-direction: column;
    justify-content: space-between;
    padding: 8px 5px 7px 0;
    text-align: right;
}

.scale li {
    font-size: 10px;
    line-height: 16px;
}

.wave-area {
    position: relative;
    flex: 1;
    background: #131416;
    overflow: hidden;
}

.event {
    position: absolute;
    left: 12px;
    top: 31px;
    bottom: 0;
    width: 26px;
    border: 1px dashed #4b5a6c;
    border-width: 0 1px;
    background: #242629;
}

.event svg {
    display: block;
    width: 24px;
    height: 250px;
    margin-top: 10px;
    fill: #919294;
}

.flag {
    position: absolute;
    left: 12px;
    height: 15px;
    padding: 0 3px;
    background: #3f6087;
    color: #fff;
    font-size: 11px;
    line-height: 15px;
    white-space: nowrap;
}

.flag.start {
    padding: 0 2px;
}

.flag.stop {
    left: 0;
    top: 16px;
    width: 37px;
    text-align: right;
}

.flag.sync {
    top: 145px;
    width: 15px;
    padding: 0 4px;
}

.lower-tabs {
    display: grid;
    grid-template-columns: 16px 110px 84px 138px 94px 114px;
    height: 20px;
    color: #e6e7e8;
}

.lower-tabs button {
    font-weight: bold;
    white-space: nowrap;
    font-size: 11px;
    line-height: 20px;
}

.lower-tabs .close {
    display: flex;
    align-items: center;
    justify-content: center;
}

.close .icon {
    width: 14px;
    height: 14px;
}

.lower-tabs .active {
    position: relative;
    margin-top: -2px;
    border: 2px solid #505254;
    border-top: 0;
    border-radius: 0 0 4px 4px;
    background: #24272a;
}

/* media rack */
.rack {
    display: flex;
    flex-direction: column;
}

.rack-tabs {
    display: flex;
    height: 24px;
}

.rack-tabs button {
    width: 69px;
    font-weight: bold;
    color: #e6e7e8;
}

.rack-tabs .active {
    position: relative;
    z-index: 1;
    width: 83px;
    margin-bottom: -2px;
    padding-bottom: 3px;
    border: 2px solid #505254;
    border-bottom: 0;
    border-radius: 4px 4px 0 0;
    background: #24272a;
    font-size: 11px;
}

.rack-body {
    flex: 1;
    margin-top: -2px;
    padding: 7px 6px 8px 7px;
    border: 2px solid #505254;
    border-radius: 8px;
    background: #24272a;
}

.search {
    display: flex;
    gap: 4px;
}

.search label {
    flex: 1;
    display: flex;
    align-items: center;
    gap: 6px;
    height: 20px;
    padding: 0 4px;
    border: 1px solid #55585a;
    border-radius: 2px;
    background: #18191b;
}

.search label .icon {
    width: 12px;
    height: 12px;
}

.search input {
    width: 150px;
    font-style: italic;
    font-size: 11px;
}

.search input::placeholder {
    color: #8b8c8e;
}

.search button {
    display: flex;
    align-items: center;
    justify-content: center;
    width: 25px;
    border: 1px solid #55585a;
    border-radius: 3px;
    background: #434547;
}

.search button .icon {
    height: 13px;
}

.crumbs {
    display: flex;
    gap: 3px;
    margin-bottom: 38px;
    padding: 6px 0 4px;
    border-bottom: 1px solid #6f7173;
}

.crumbs button {
    display: flex;
    align-items: center;
    justify-content: center;
    width: 20px;
    height: 19px;
    color: #d6d7d8;
}

.crumbs .back {
    border: 1px solid #34373a;
    border-radius: 2px;
    color: #66686a;
}

.crumbs .icon {
    width: 14px;
    height: 14px;
}

.tiles {
    display: grid;
    grid-template-columns: 1fr 1fr;
    row-gap: 26px;
    margin-left: -4px;
}

.tiles button {
    display: flex;
    flex-direction: column;
    align-items: center;
    gap: 12px;
    height: 98px;
    color: #e6e7e8;
    font-size: 11px;
    white-space: nowrap;
}

.tile {
    display: flex;
    align-items: center;
    justify-content: center;
    flex: none;
    width: 70px;
    height: 70px;
    border-radius: 2px;
    background: #a6a8aa;
    color: #25282b;
    fill: currentColor;
}

.fx {
    font-family: Inter, sans-serif;
    font-weight: 800;
    font-size: 36px;
}

/* transport */
.transport {
    display: flex;
    align-items: center;
    gap: 5px;
    height: 40px;
    padding: 0 10px 0 4px;
    background: #26282b;
}

.dots {
    position: relative;
    margin-right: 6px;
}

.group.dots {
    overflow: visible;
}

.dots::after {
    content: "";
    position: absolute;
    left: calc(100% + 3px);
    top: 6px;
    height: 14px;
    border-left: 2px dotted #c2c3c4;
}

.aq {
    width: 38px;
    font-size: 14px;
}

.dim {
    color: #77797b;
}

.locator.first {
    margin: 0 5px 0 130px;
}

.locator output {
    width: 125px;
    padding-right: 7px;
    background: #1a1b1d;
    border-left: 1px solid #55585a;
    font-size: 14px;
    line-height: 26px;
    text-align: right;
    white-space: pre;
}

.play {
    display: flex;
    height: 32px;
    border: 2px solid #b9bbbc;
    border-radius: 3px;
    background: #646668;
    color: #e8e8e8;
}

.play.dots::after {
    top: 7px;
    left: calc(100% + 4px);
}

.play button {
    display: flex;
    align-items: center;
    justify-content: center;
    width: 50px;
}

.play .p3 {
    width: 41px;
}

.play .active {
    background: #a5a9ab;
    color: #1a1b1d;
}

.tempo {
    display: flex;
    align-items: center;
    width: 81px;
    background: #1a1b1d;
    border-right: 1px solid #55585a;
}

.tempo input {
    width: 66px;
    padding-left: 12px;
}

.spin {
    width: 8px;
    height: 16px;
    fill: #d2d3d4;
}

.tool.text {
    width: 50px;
}

.last {
    margin-left: auto;
}

.levels {
    display: flex;
    justify-content: flex-end;
    width: 89px;
    height: 25px;
    margin-right: 0;
    padding: 2px 3px;
    border: 1px solid #55585a;
    border-radius: 3px;
    background: #1a1b1d;
}

.levels i {
    width: 1px;
    margin-right: 5px;
    background: #66686a;
}

.levels b {
    width: 4px;
    background: #f01414;
}

.levels b + b {
    margin-left: 46px;
}
```
FILE: script.js
```js
const tracks = [
    { name: "ピアノ", notes: "M18 18h17v5h-17zM17 27h18v5h-18zM32 5h3v4h-3z" },
    { name: "サックス" },
    { name: "クラリネット" },
    { name: "バスクラリネット", notes: "M17 20h2v3h-2zM22 20h2v3h-2zM27 20h2v3h-2zM32 20h2v3h-2z" },
    { name: "Audio 01", audio: true },
    { name: "フルート" },
    { name: "テューバ", notes: "M17 20h2v3h-2zM27 20h2v3h-2z" }
];

const originX = 8;
const barWidth = 37.8;

function icon(id) {
    return `<svg class="icon"><use href="#${id}"/></svg>`;
}

function trackRow(track, index) {
    return `<div class="track${track.audio ? " selected" : ""}">
        <div class="track-id">${icon(track.audio ? "wave" : "keys")}<span>${index + 1}</span></div>
        <div class="ctl"><button>M</button><button>S</button></div>
        <div class="track-main">
            <div class="track-name">${track.name}</div>
            <div class="track-ctls">
                <div class="ctl"><button class="${track.audio ? "armed" : ""}" aria-label="録音可能">${icon("dot")}</button><button aria-label="モニタリング">${icon("speaker")}</button></div>
                <div class="ctl"><button class="e"><span>e</span></button><button aria-label="インストゥルメント">${icon(track.audio ? "ring" : "keys")}</button></div>
                <div class="ctl"><button>R</button><button>W</button></div>
            </div>
        </div>
    </div>`;
}

function lane(track) {
    if (track.audio) {
        const left = Math.round(originX + 3 * barWidth);
        return `<div class="lane"><div class="clip audio" style="left:${left}px"><b>Audio 01_52</b><small>-17.68 dB</small></div></div>`;
    }
    const notes = track.notes ? `<svg viewBox="0 0 35 39"><path d="${track.notes}"/></svg>` : "";
    return `<div class="lane"><div class="clip" style="left:${originX + 1}px">${notes}${track.name}</div></div>`;
}

function marks(count, step, width, origin) {
    let html = "";
    for (let i = 0; i < count; i++) {
        html += `<span class="mark" style="left:${Math.round(origin + i * width)}px">${1 + i * step}</span>`;
    }
    return html;
}

document.getElementById("tracks").innerHTML =
    `<div class="track folder"><div class="track-id">${icon("folder")}</div><div class="track-name">入力/出力</div></div>` +
    tracks.map(trackRow).join("");

// bar lines are drawn first so the clips cover them
let lines = "";
for (let i = 1; i < 28; i++) {
    lines += `<span class="bar-line${i % 2 ? "" : " strong"}" style="left:${Math.round(originX + i * barWidth)}px"></span>`;
}
document.getElementById("lanes").innerHTML = lines +
    `<div class="lane folder"></div>` + tracks.map(lane).join("") +
    `<span class="playline" style="left:${originX}px"></span>`;

document.getElementById("ruler").innerHTML = marks(14, 2, barWidth * 2, originX) +
    `<span class="playhead" style="left:${originX - 9}px"></span>`;
document.getElementById("sampleRuler").innerHTML = marks(23, 16, 66.36, 0) +
    `<span class="playhead" style="left:-9px"></span>`;
```
